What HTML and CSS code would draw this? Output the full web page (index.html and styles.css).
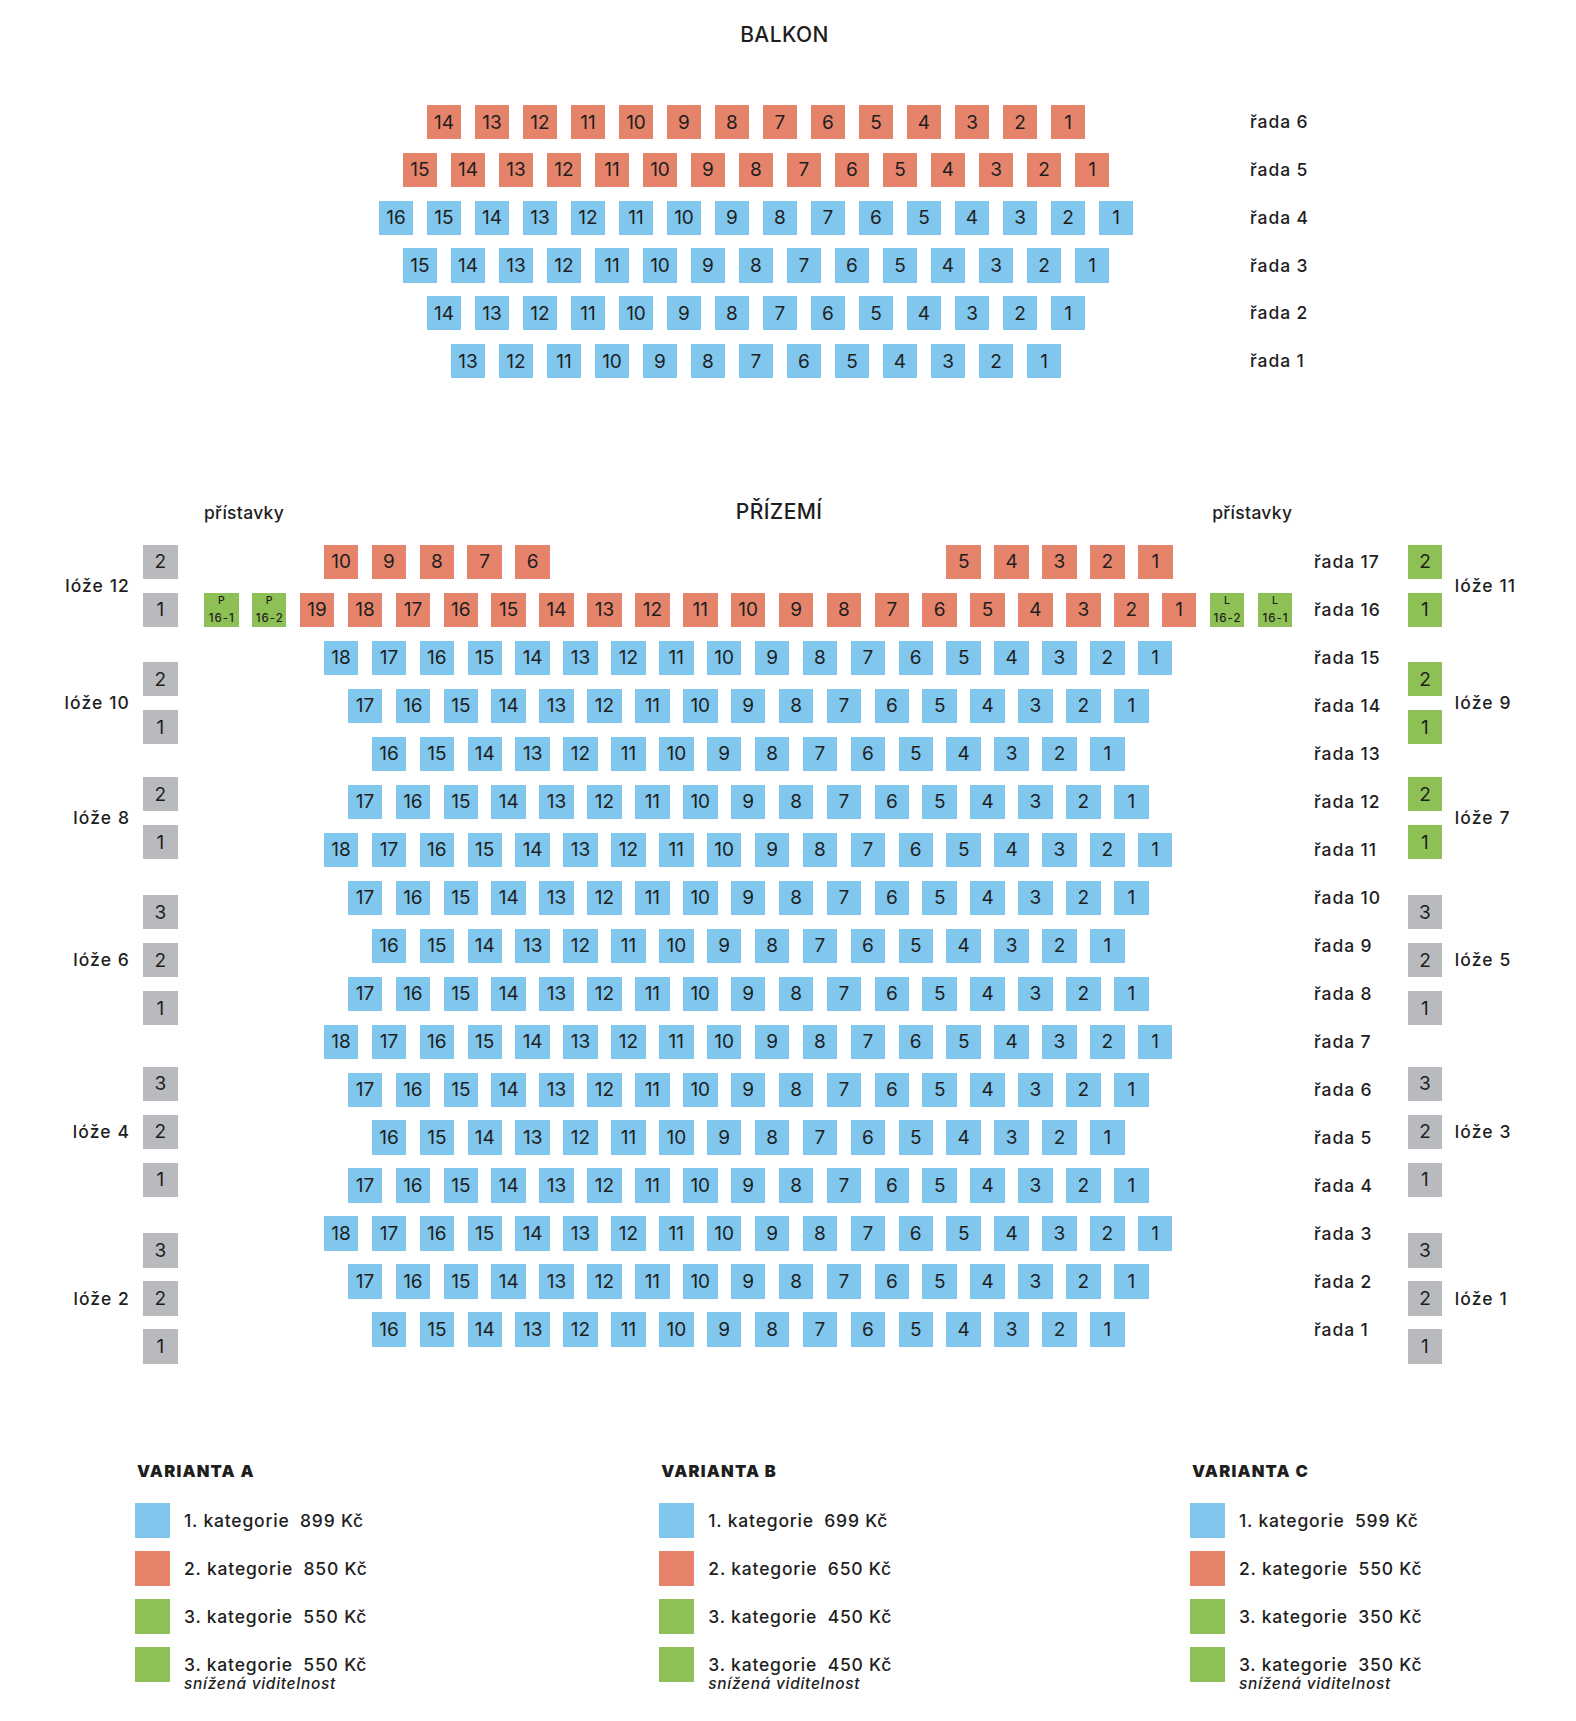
FILE: index.html
```html
<!DOCTYPE html>
<html lang="cs">
<head>
<meta charset="utf-8">
<title>Plán sálu</title>
<link rel="stylesheet" href="styles.css">
</head>
<body>
<main class="plan">
  <section class="balcony">
    <h2 class="title">BALKON</h2>
    <div class="balcony-rows">
      <div class="brow"><div class="seats red"><span>14</span><span>13</span><span>12</span><span>11</span><span>10</span><span>9</span><span>8</span><span>7</span><span>6</span><span>5</span><span>4</span><span>3</span><span>2</span><span>1</span></div><span class="row-label">řada 6</span></div>
      <div class="brow"><div class="seats red"><span>15</span><span>14</span><span>13</span><span>12</span><span>11</span><span>10</span><span>9</span><span>8</span><span>7</span><span>6</span><span>5</span><span>4</span><span>3</span><span>2</span><span>1</span></div><span class="row-label">řada 5</span></div>
      <div class="brow"><div class="seats blue"><span>16</span><span>15</span><span>14</span><span>13</span><span>12</span><span>11</span><span>10</span><span>9</span><span>8</span><span>7</span><span>6</span><span>5</span><span>4</span><span>3</span><span>2</span><span>1</span></div><span class="row-label">řada 4</span></div>
      <div class="brow"><div class="seats blue"><span>15</span><span>14</span><span>13</span><span>12</span><span>11</span><span>10</span><span>9</span><span>8</span><span>7</span><span>6</span><span>5</span><span>4</span><span>3</span><span>2</span><span>1</span></div><span class="row-label">řada 3</span></div>
      <div class="brow"><div class="seats blue"><span>14</span><span>13</span><span>12</span><span>11</span><span>10</span><span>9</span><span>8</span><span>7</span><span>6</span><span>5</span><span>4</span><span>3</span><span>2</span><span>1</span></div><span class="row-label">řada 2</span></div>
      <div class="brow"><div class="seats blue"><span>13</span><span>12</span><span>11</span><span>10</span><span>9</span><span>8</span><span>7</span><span>6</span><span>5</span><span>4</span><span>3</span><span>2</span><span>1</span></div><span class="row-label">řada 1</span></div>
    </div>
  </section>

  <section class="parterre">
    <div class="parterre-head">
      <span class="extra">přístavky</span>
      <h2 class="title">PŘÍZEMÍ</h2>
      <span class="extra">přístavky</span>
    </div>
    <div class="parterre-body">
      <div class="boxes boxes--left">
        <div class="lodge lodge--g1"><span class="lodge-name">lóže 12</span><div class="lodge-seats gray"><span>2</span><span>1</span></div></div>
        <div class="lodge lodge--g2"><span class="lodge-name">lóže 10</span><div class="lodge-seats gray"><span>2</span><span>1</span></div></div>
        <div class="lodge lodge--g3"><span class="lodge-name">lóže 8</span><div class="lodge-seats gray"><span>2</span><span>1</span></div></div>
        <div class="lodge lodge--g4"><span class="lodge-name">lóže 6</span><div class="lodge-seats gray"><span>3</span><span>2</span><span>1</span></div></div>
        <div class="lodge lodge--g5"><span class="lodge-name">lóže 4</span><div class="lodge-seats gray"><span>3</span><span>2</span><span>1</span></div></div>
        <div class="lodge lodge--g6"><span class="lodge-name">lóže 2</span><div class="lodge-seats gray"><span>3</span><span>2</span><span>1</span></div></div>
      </div>

      <div class="stalls">
        <div class="srow"><div class="seats red"><span>10</span><span>9</span><span>8</span><span>7</span><span>6</span><span class="aisle"></span><span>5</span><span>4</span><span>3</span><span>2</span><span>1</span></div><span class="row-label">řada 17</span></div>
        <div class="srow"><div class="seats red"><span class="g small"><b>P</b>16-1</span><span class="g small"><b>P</b>16-2</span><span>19</span><span>18</span><span>17</span><span>16</span><span>15</span><span>14</span><span>13</span><span>12</span><span>11</span><span>10</span><span>9</span><span>8</span><span>7</span><span>6</span><span>5</span><span>4</span><span>3</span><span>2</span><span>1</span><span class="g small"><b>L</b>16-2</span><span class="g small"><b>L</b>16-1</span></div><span class="row-label">řada 16</span></div>
        <div class="srow"><div class="seats blue"><span>18</span><span>17</span><span>16</span><span>15</span><span>14</span><span>13</span><span>12</span><span>11</span><span>10</span><span>9</span><span>8</span><span>7</span><span>6</span><span>5</span><span>4</span><span>3</span><span>2</span><span>1</span></div><span class="row-label">řada 15</span></div>
        <div class="srow"><div class="seats blue"><span>17</span><span>16</span><span>15</span><span>14</span><span>13</span><span>12</span><span>11</span><span>10</span><span>9</span><span>8</span><span>7</span><span>6</span><span>5</span><span>4</span><span>3</span><span>2</span><span>1</span></div><span class="row-label">řada 14</span></div>
        <div class="srow"><div class="seats blue"><span>16</span><span>15</span><span>14</span><span>13</span><span>12</span><span>11</span><span>10</span><span>9</span><span>8</span><span>7</span><span>6</span><span>5</span><span>4</span><span>3</span><span>2</span><span>1</span></div><span class="row-label">řada 13</span></div>
        <div class="srow"><div class="seats blue"><span>17</span><span>16</span><span>15</span><span>14</span><span>13</span><span>12</span><span>11</span><span>10</span><span>9</span><span>8</span><span>7</span><span>6</span><span>5</span><span>4</span><span>3</span><span>2</span><span>1</span></div><span class="row-label">řada 12</span></div>
        <div class="srow"><div class="seats blue"><span>18</span><span>17</span><span>16</span><span>15</span><span>14</span><span>13</span><span>12</span><span>11</span><span>10</span><span>9</span><span>8</span><span>7</span><span>6</span><span>5</span><span>4</span><span>3</span><span>2</span><span>1</span></div><span class="row-label">řada 11</span></div>
        <div class="srow"><div class="seats blue"><span>17</span><span>16</span><span>15</span><span>14</span><span>13</span><span>12</span><span>11</span><span>10</span><span>9</span><span>8</span><span>7</span><span>6</span><span>5</span><span>4</span><span>3</span><span>2</span><span>1</span></div><span class="row-label">řada 10</span></div>
        <div class="srow"><div class="seats blue"><span>16</span><span>15</span><span>14</span><span>13</span><span>12</span><span>11</span><span>10</span><span>9</span><span>8</span><span>7</span><span>6</span><span>5</span><span>4</span><span>3</span><span>2</span><span>1</span></div><span class="row-label">řada 9</span></div>
        <div class="srow"><div class="seats blue"><span>17</span><span>16</span><span>15</span><span>14</span><span>13</span><span>12</span><span>11</span><span>10</span><span>9</span><span>8</span><span>7</span><span>6</span><span>5</span><span>4</span><span>3</span><span>2</span><span>1</span></div><span class="row-label">řada 8</span></div>
        <div class="srow"><div class="seats blue"><span>18</span><span>17</span><span>16</span><span>15</span><span>14</span><span>13</span><span>12</span><span>11</span><span>10</span><span>9</span><span>8</span><span>7</span><span>6</span><span>5</span><span>4</span><span>3</span><span>2</span><span>1</span></div><span class="row-label">řada 7</span></div>
        <div class="srow"><div class="seats blue"><span>17</span><span>16</span><span>15</span><span>14</span><span>13</span><span>12</span><span>11</span><span>10</span><span>9</span><span>8</span><span>7</span><span>6</span><span>5</span><span>4</span><span>3</span><span>2</span><span>1</span></div><span class="row-label">řada 6</span></div>
        <div class="srow"><div class="seats blue"><span>16</span><span>15</span><span>14</span><span>13</span><span>12</span><span>11</span><span>10</span><span>9</span><span>8</span><span>7</span><span>6</span><span>5</span><span>4</span><span>3</span><span>2</span><span>1</span></div><span class="row-label">řada 5</span></div>
        <div class="srow"><div class="seats blue"><span>17</span><span>16</span><span>15</span><span>14</span><span>13</span><span>12</span><span>11</span><span>10</span><span>9</span><span>8</span><span>7</span><span>6</span><span>5</span><span>4</span><span>3</span><span>2</span><span>1</span></div><span class="row-label">řada 4</span></div>
        <div class="srow"><div class="seats blue"><span>18</span><span>17</span><span>16</span><span>15</span><span>14</span><span>13</span><span>12</span><span>11</span><span>10</span><span>9</span><span>8</span><span>7</span><span>6</span><span>5</span><span>4</span><span>3</span><span>2</span><span>1</span></div><span class="row-label">řada 3</span></div>
        <div class="srow"><div class="seats blue"><span>17</span><span>16</span><span>15</span><span>14</span><span>13</span><span>12</span><span>11</span><span>10</span><span>9</span><span>8</span><span>7</span><span>6</span><span>5</span><span>4</span><span>3</span><span>2</span><span>1</span></div><span class="row-label">řada 2</span></div>
        <div class="srow"><div class="seats blue"><span>16</span><span>15</span><span>14</span><span>13</span><span>12</span><span>11</span><span>10</span><span>9</span><span>8</span><span>7</span><span>6</span><span>5</span><span>4</span><span>3</span><span>2</span><span>1</span></div><span class="row-label">řada 1</span></div>
      </div>

      <div class="boxes boxes--right">
        <div class="lodge lodge--g1"><div class="lodge-seats green"><span>2</span><span>1</span></div><span class="lodge-name">lóže 11</span></div>
        <div class="lodge lodge--g2"><div class="lodge-seats green"><span>2</span><span>1</span></div><span class="lodge-name">lóže 9</span></div>
        <div class="lodge lodge--g3"><div class="lodge-seats green"><span>2</span><span>1</span></div><span class="lodge-name">lóže 7</span></div>
        <div class="lodge lodge--g4"><div class="lodge-seats gray"><span>3</span><span>2</span><span>1</span></div><span class="lodge-name">lóže 5</span></div>
        <div class="lodge lodge--g5"><div class="lodge-seats gray"><span>3</span><span>2</span><span>1</span></div><span class="lodge-name">lóže 3</span></div>
        <div class="lodge lodge--g6"><div class="lodge-seats gray"><span>3</span><span>2</span><span>1</span></div><span class="lodge-name">lóže 1</span></div>
      </div>
    </div>
  </section>

  <section class="legend">
    <div class="variant">
      <h3 class="variant-title">VARIANTA A</h3>
      <ul class="variant-list">
        <li><span class="swatch blue-bg"></span><span class="legend-text">1. kategorie <span class="price">899 Kč</span></span></li>
        <li><span class="swatch red-bg"></span><span class="legend-text">2. kategorie <span class="price">850 Kč</span></span></li>
        <li><span class="swatch green-bg"></span><span class="legend-text">3. kategorie <span class="price">550 Kč</span></span></li>
        <li><span class="swatch green-bg"></span><span class="legend-text">3. kategorie <span class="price">550 Kč</span><em class="legend-note">snížená viditelnost</em></span></li>
      </ul>
    </div>
    <div class="variant">
      <h3 class="variant-title">VARIANTA B</h3>
      <ul class="variant-list">
        <li><span class="swatch blue-bg"></span><span class="legend-text">1. kategorie <span class="price">699 Kč</span></span></li>
        <li><span class="swatch red-bg"></span><span class="legend-text">2. kategorie <span class="price">650 Kč</span></span></li>
        <li><span class="swatch green-bg"></span><span class="legend-text">3. kategorie <span class="price">450 Kč</span></span></li>
        <li><span class="swatch green-bg"></span><span class="legend-text">3. kategorie <span class="price">450 Kč</span><em class="legend-note">snížená viditelnost</em></span></li>
      </ul>
    </div>
    <div class="variant">
      <h3 class="variant-title">VARIANTA C</h3>
      <ul class="variant-list">
        <li><span class="swatch blue-bg"></span><span class="legend-text">1. kategorie <span class="price">599 Kč</span></span></li>
        <li><span class="swatch red-bg"></span><span class="legend-text">2. kategorie <span class="price">550 Kč</span></span></li>
        <li><span class="swatch green-bg"></span><span class="legend-text">3. kategorie <span class="price">350 Kč</span></span></li>
        <li><span class="swatch green-bg"></span><span class="legend-text">3. kategorie <span class="price">350 Kč</span><em class="legend-note">snížená viditelnost</em></span></li>
      </ul>
    </div>
  </section>
</main>
</body>
</html>
```

FILE: styles.css
```css
:root {
  --blue: #80c6ed;
  --red: #e6846b;
  --green: #8ec155;
  --gray: #b9babe;
  --ink: #1e1e1e;
  --sw: 34.5px;
  --sh: 34.3px;
}

* { box-sizing: border-box; }

html, body {
  margin: 0;
  background: #fff;
}

body {
  font-family: Inter, "Noto Sans", sans-serif;
  color: var(--ink);
}

.plan {
  width: 1576px;
  padding-bottom: 20px;
}

.title {
  margin: 0;
  font-size: 21px;
  font-weight: 500;
  line-height: 24px;
  letter-spacing: 0.02em;
}

/* seats */
.seats {
  display: flex;
  justify-content: center;
}

.seats span,
.lodge-seats span {
  flex: none;
  width: var(--sw);
  height: var(--sh);
  display: flex;
  align-items: center;
  justify-content: center;
  font-size: 19px;
  line-height: 1;
  font-weight: 400;
}

.red span { background: var(--red); }
.blue span { background: var(--blue); }
.green span { background: var(--green); }
.gray span { background: var(--gray); }
.seats span.g { background: var(--green); }

.seats span.small {
  flex-direction: column;
  font-size: 11.5px;
  line-height: 16.5px;
  letter-spacing: 1px;
  font-weight: 500;
  padding-left: 1px;
}

.seats span.small b {
  font-weight: 500;
  font-size: 10.5px;
}

.seats span.aisle {
  background: none;
  width: calc(8 * 47.9px - 13.4px);
}

.row-label,
.lodge-name,
.extra {
  font-size: 17.5px;
  font-weight: 500;
  line-height: 24px;
  white-space: nowrap;
  letter-spacing: 0.9px;
}

.lodge-name {
  letter-spacing: 1.1px;
}

.extra {
  letter-spacing: 0.3px;
}

/* balcony */
.balcony {
  padding-top: 23px;
}

.balcony .title {
  text-align: center;
  padding-right: 7px;
}

.balcony-rows {
  margin-top: 58px;
  display: flex;
  flex-direction: column;
  gap: 13.5px;
}

.brow {
  display: flex;
  align-items: center;
}

.brow .seats {
  width: 912px;
  margin-left: 300px;
  gap: 13.5px;
}

.brow .row-label {
  margin-left: 38px;
}

/* parterre */
.parterre {
  margin-top: 122px;
}

.parterre-head {
  display: flex;
  align-items: baseline;
  justify-content: space-between;
  width: 1088.3px;
  margin-left: 204px;
}

.parterre-head .title {
  padding-left: 62px;
}

.parterre-body {
  display: flex;
  align-items: flex-start;
  margin-top: 19.4px;
}

.stalls {
  margin-left: 26.5px;
  display: flex;
  flex-direction: column;
  gap: 13.7px;
}

.srow {
  display: flex;
  align-items: center;
}

.srow .seats {
  width: 1088.3px;
  gap: 13.4px;
}

.srow .row-label {
  margin-left: 21.7px;
  width: 93.7px;
}

.boxes {
  display: flex;
  flex-direction: column;
}

.boxes--left {
  width: 177.5px;
}

.lodge {
  display: flex;
  align-items: center;
  gap: 13px;
}

.boxes--left .lodge {
  justify-content: flex-end;
}

.boxes--right .lodge {
  gap: 12.7px;
}

.lodge-seats {
  display: flex;
  flex-direction: column;
  gap: 13.7px;
}

.lodge--g2 { margin-top: 35.2px; }
.lodge--g3 { margin-top: 32.7px; }
.lodge--g4 { margin-top: 35.7px; }
.lodge--g5 { margin-top: 41.2px; }
.lodge--g6 { margin-top: 36.7px; }

/* legend */
.legend {
  display: grid;
  grid-template-columns: 524.3px 530.7px auto;
  margin-left: 135px;
  margin-top: 97px;
}

.variant-title {
  margin: 0 0 22.5px 2px;
  font-size: 16.5px;
  font-weight: 900;
  line-height: 20px;
  letter-spacing: 1.2px;
}

.variant-list {
  list-style: none;
  margin: 0;
  padding: 0;
  display: flex;
  flex-direction: column;
  gap: 13px;
}

.variant-list li {
  display: flex;
  align-items: flex-start;
  gap: 14px;
}

.swatch {
  flex: none;
  width: 35px;
  height: 35px;
}

.blue-bg { background: var(--blue); }
.red-bg { background: var(--red); }
.green-bg { background: var(--green); }

.legend-text {
  font-size: 17.5px;
  font-weight: 500;
  line-height: 35px;
  white-space: nowrap;
  letter-spacing: 0.8px;
}

.price {
  margin-left: 5px;
}

.legend-note {
  display: block;
  margin-top: -7px;
  font-size: 15.5px;
  line-height: 18px;
  font-weight: 500;
  letter-spacing: 0.7px;
}
```
